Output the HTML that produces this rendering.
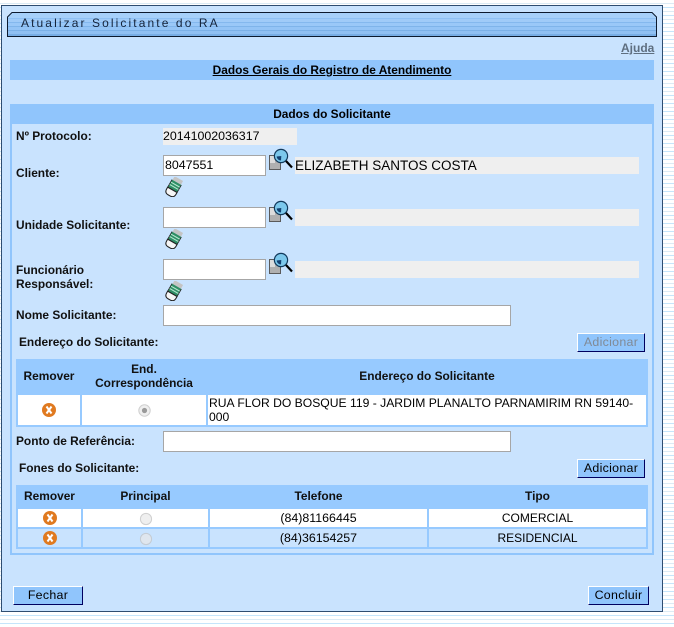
<!DOCTYPE html>
<html><head><meta charset="utf-8"><style>
html,body{margin:0;padding:0;width:674px;height:627px;overflow:hidden}
body{background:repeating-linear-gradient(to bottom,#fff 0,#fff 3px,#dcebf5 3px,#dcebf5 4px,#fff 4px,#fff 7px,#c5e5fb 7px,#c5e5fb 8px);font-family:"Liberation Sans",Arial,sans-serif;font-size:12px;color:#000;position:relative}
div,span,a{position:absolute;box-sizing:border-box;white-space:nowrap}
#panel{left:1px;top:5px;width:662px;height:607px;background:#c9e3fe;border:1px solid #2f4d70}
#titlebg{left:7px;top:12px;width:650px;height:25px;background:linear-gradient(to bottom,#a6d0fa 0,#a6d0fa 6px,#8fc1f4 6px,#8fc1f4 7px,#a0cbf8 7px,#a0cbf8 10px,#84b8ee 10px,#84b8ee 11px,#9ac8f8 11px,#9ac8f8 14px,#7fb4ea 14px,#7fb4ea 15px,#94c4f6 15px,#94c4f6 18px,#7bb0e6 18px,#7bb0e6 19px,#90c0f2 19px,#90c0f2 22px,#78ade4 22px,#78ade4 25px);clip-path:polygon(5px 0,calc(100% - 5px) 0,100% 5px,100% 100%,0 100%,0 5px)}
#title{left:21px;top:16px;font-size:12px;letter-spacing:2.1px;line-height:14px;color:#14233a}
.bar{left:10px;width:644px;height:20px;background:#90c5fc;text-align:center;line-height:20px;color:#000;font-size:11.9px}
.l{font-weight:bold;left:16px;font-size:11.9px;line-height:14px;color:#111}
.in{background:#fff;border:1px solid #a6a6a6;left:163px;height:21px;font-size:12.4px;line-height:19px;padding-left:1px}
.ro{background:#efefef;left:295px;width:344px;height:17px;font-size:13.5px;line-height:17px}
.th{background:#97caff}
.c{background:#fff;text-align:center;font-size:12px}
.c2{background:#c9e3fe;text-align:center;font-size:12px}
.h{font-weight:bold;text-align:center;line-height:14px;color:#111;font-size:11.9px}
.btn{background:#90c5fc;border:1px solid;border-color:#fff #000060 #000060 #fff;text-align:center;font-size:12.4px;line-height:17px;height:19px;letter-spacing:.3px}
svg{position:absolute;display:block}
</style></head><body>
<div id="panel"></div>
<div id="titlebg"></div>
<svg style="left:7px;top:12px" width="650" height="25"><path d="M.5 24.5V5L5 .5H645L649.5 5V24.5Z" fill="none" stroke="#0c1a2e"/></svg>
<div id="title">Atualizar Solicitante do RA</div>
<a style="left:621px;top:41px;font-weight:bold;font-size:12px;color:#5f6f80;text-decoration:underline">Ajuda</a>
<div class="bar" style="top:60px;font-weight:bold;text-decoration:underline">Dados Gerais do Registro de Atendimento</div>
<div class="bar" style="top:104px;font-weight:bold">Dados do Solicitante</div>
<div style="left:10px;top:124px;width:2px;height:431px;background:#90c5fc"></div>
<div style="left:652px;top:124px;width:2px;height:431px;background:#90c5fc"></div>
<div style="left:10px;top:553px;width:644px;height:2px;background:#90c5fc"></div>

<div class="l" style="top:129px">Nº Protocolo:</div>
<div style="left:163px;top:128px;width:134px;height:17px;background:#efefef;font-size:12.4px;line-height:17px">20141002036317</div>

<div class="l" style="top:166px">Cliente:</div>
<div class="in" style="top:155px;width:103px">8047551</div>
<div class="ro" style="top:157px">ELIZABETH SANTOS COSTA</div>

<div class="l" style="top:218px">Unidade Solicitante:</div>
<div class="in" style="top:207px;width:103px"></div>
<div class="ro" style="top:209px"></div>

<div class="l" style="top:263px">Funcionário<br>Responsável:</div>
<div class="in" style="top:259px;width:103px"></div>
<div class="ro" style="top:261px"></div>

<div class="l" style="top:308px">Nome Solicitante:</div>
<div class="in" style="top:305px;width:348px"></div>

<!-- magnifier icons -->
<svg style="left:268px;top:148px" width="26" height="25" viewBox="0 0 26 25"><rect x="1.5" y="7.5" width="11" height="14" fill="#b0b0b0" stroke="#5a5a5a"/><path d="M2 8h5v7H2z" fill="#dcdcdc"/><circle cx="13" cy="8" r="6.6" fill="#7cc8ec" stroke="#123a5c" stroke-width="1.2"/><path d="M8.6 8.5a4.4 4.4 0 0 0 4.4 4l.3-4.5z" fill="#123f70"/><path d="M18 13l6 6.5" stroke="#000" stroke-width="2.2"/></svg>
<svg style="left:268px;top:200px" width="26" height="25" viewBox="0 0 26 25"><rect x="1.5" y="7.5" width="11" height="14" fill="#b0b0b0" stroke="#5a5a5a"/><path d="M2 8h5v7H2z" fill="#dcdcdc"/><circle cx="13" cy="8" r="6.6" fill="#7cc8ec" stroke="#123a5c" stroke-width="1.2"/><path d="M8.6 8.5a4.4 4.4 0 0 0 4.4 4l.3-4.5z" fill="#123f70"/><path d="M18 13l6 6.5" stroke="#000" stroke-width="2.2"/></svg>
<svg style="left:268px;top:252px" width="26" height="25" viewBox="0 0 26 25"><rect x="1.5" y="7.5" width="11" height="14" fill="#b0b0b0" stroke="#5a5a5a"/><path d="M2 8h5v7H2z" fill="#dcdcdc"/><circle cx="13" cy="8" r="6.6" fill="#7cc8ec" stroke="#123a5c" stroke-width="1.2"/><path d="M8.6 8.5a4.4 4.4 0 0 0 4.4 4l.3-4.5z" fill="#123f70"/><path d="M18 13l6 6.5" stroke="#000" stroke-width="2.2"/></svg>
<!-- eraser icons -->
<svg style="left:164px;top:177px" width="20" height="20" viewBox="0 0 20 20"><g transform="rotate(30 10 10) translate(10 10) scale(1.08) translate(-10 -10)"><path d="M5.5 1h9v5h-9z" fill="#c4c4c4"/><path d="M5 5h10v8H5z" fill="#2f8f66"/><path d="M5 7.5h10M5 10h10" stroke="#b8e8d0"/><path d="M5 13h10v2q0 4-4 4H9q-4 0-4-4z" fill="#f6f6f6" stroke="#222"/><path d="M5 5v8M15 5v8" stroke="#222" stroke-width=".7"/></g></svg>
<svg style="left:164px;top:229px" width="20" height="20" viewBox="0 0 20 20"><g transform="rotate(30 10 10) translate(10 10) scale(1.08) translate(-10 -10)"><path d="M5.5 1h9v5h-9z" fill="#c4c4c4"/><path d="M5 5h10v8H5z" fill="#2f8f66"/><path d="M5 7.5h10M5 10h10" stroke="#b8e8d0"/><path d="M5 13h10v2q0 4-4 4H9q-4 0-4-4z" fill="#f6f6f6" stroke="#222"/><path d="M5 5v8M15 5v8" stroke="#222" stroke-width=".7"/></g></svg>
<svg style="left:164px;top:281px" width="20" height="20" viewBox="0 0 20 20"><g transform="rotate(30 10 10) translate(10 10) scale(1.08) translate(-10 -10)"><path d="M5.5 1h9v5h-9z" fill="#c4c4c4"/><path d="M5 5h10v8H5z" fill="#2f8f66"/><path d="M5 7.5h10M5 10h10" stroke="#b8e8d0"/><path d="M5 13h10v2q0 4-4 4H9q-4 0-4-4z" fill="#f6f6f6" stroke="#222"/><path d="M5 5v8M15 5v8" stroke="#222" stroke-width=".7"/></g></svg>

<div class="l" style="left:19px;top:335px">Endereço do Solicitante:</div>
<div class="btn" style="left:577px;top:333px;width:68px;color:#808a96">Adicionar</div>

<div class="th" style="left:16px;top:359px;width:632px;height:68px"></div>
<div class="h" style="left:18px;top:369px;width:62px">Remover</div>
<div class="h" style="left:82px;top:362px;width:124px">End.<br>Correspondência</div>
<div class="h" style="left:208px;top:369px;width:438px">Endereço do Solicitante</div>
<div class="c" style="left:18px;top:395px;width:62px;height:30px"></div>
<div class="c" style="left:82px;top:395px;width:124px;height:30px"></div>
<div class="c" style="left:208px;top:395px;width:438px;height:30px;text-align:left;line-height:14px;padding:1px 0 0 1px;font-size:12.15px">RUA FLOR DO BOSQUE 119 - JARDIM PLANALTO PARNAMIRIM RN 59140-<br>000</div>
<svg style="left:42px;top:403px" width="14" height="14" viewBox="0 0 14 14"><circle cx="7" cy="7" r="7" fill="#e07a20"/><path d="M4.5 3.5l5 7M9.5 3.5l-5 7" stroke="#fff" stroke-width="2"/></svg>
<svg style="left:138px;top:404px" width="13" height="13" viewBox="0 0 13 13"><circle cx="6.5" cy="6.5" r="5.7" fill="#efefef" stroke="#cfcfcf"/><circle cx="6.5" cy="6.5" r="2.6" fill="#9a9a9a"/></svg>

<div class="l" style="top:434px">Ponto de Referência:</div>
<div class="in" style="top:431px;width:348px"></div>

<div class="l" style="left:19px;top:461px">Fones do Solicitante:</div>
<div class="btn" style="left:577px;top:459px;width:68px">Adicionar</div>

<div class="th" style="left:16px;top:485px;width:632px;height:64px"></div>
<div class="h" style="left:18px;top:489px;width:63px">Remover</div>
<div class="h" style="left:83px;top:489px;width:125px">Principal</div>
<div class="h" style="left:210px;top:489px;width:217px">Telefone</div>
<div class="h" style="left:429px;top:489px;width:217px">Tipo</div>

<div class="c" style="left:18px;top:509px;width:63px;height:18px"></div>
<div class="c" style="left:83px;top:509px;width:125px;height:18px"></div>
<div class="c" style="left:210px;top:509px;width:217px;height:18px;line-height:18px;font-size:12.4px">(84)81166445</div>
<div class="c" style="left:429px;top:509px;width:217px;height:18px;line-height:18px">COMERCIAL</div>
<div class="c2" style="left:18px;top:529px;width:63px;height:18px"></div>
<div class="c2" style="left:83px;top:529px;width:125px;height:18px"></div>
<div class="c2" style="left:210px;top:529px;width:217px;height:18px;line-height:18px;font-size:12.4px">(84)36154257</div>
<div class="c2" style="left:429px;top:529px;width:217px;height:18px;line-height:18px">RESIDENCIAL</div>
<svg style="left:43px;top:511px" width="14" height="14" viewBox="0 0 14 14"><circle cx="7" cy="7" r="7" fill="#e07a20"/><path d="M4.5 3.5l5 7M9.5 3.5l-5 7" stroke="#fff" stroke-width="2"/></svg>
<svg style="left:43px;top:531px" width="14" height="14" viewBox="0 0 14 14"><circle cx="7" cy="7" r="7" fill="#e07a20"/><path d="M4.5 3.5l5 7M9.5 3.5l-5 7" stroke="#fff" stroke-width="2"/></svg>
<svg style="left:139px;top:512px" width="14" height="14" viewBox="0 0 14 14"><circle cx="7" cy="7" r="5.6" fill="#efefef" stroke="#cfcfcf"/></svg>
<svg style="left:139px;top:532px" width="14" height="14" viewBox="0 0 14 14"><circle cx="7" cy="7" r="5.6" fill="#dfe6ee" stroke="#c4cbd3"/></svg>

<div class="btn" style="left:13px;top:586px;width:70px">Fechar</div>
<div class="btn" style="left:588px;top:586px;width:61px">Concluir</div>
</body></html>
